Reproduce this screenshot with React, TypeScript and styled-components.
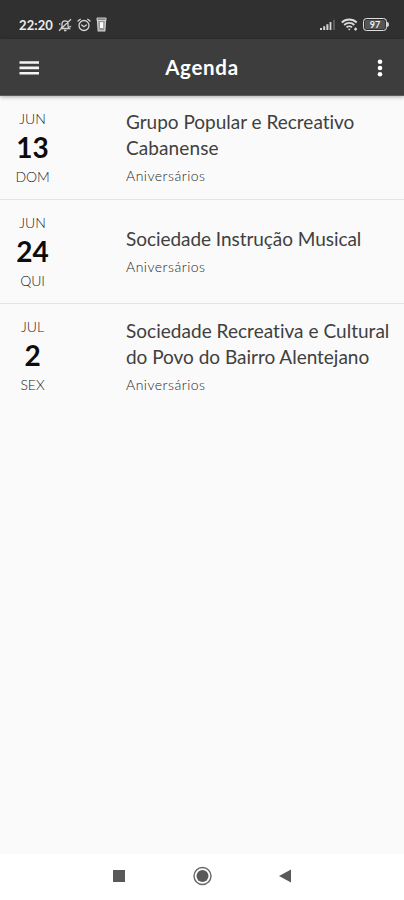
import React from 'react';
import styled, { createGlobalStyle } from 'styled-components';

const GlobalStyle = createGlobalStyle`
  * { box-sizing: border-box; }
  body { margin: 0; background: #fafafa; }
`;

const Screen = styled.div`
  width: 404px;
  height: 900px;
  display: flex;
  flex-direction: column;
  overflow: hidden;
  background: #fafafa;
  font-family: Lato, 'Open Sans', sans-serif;
`;

const StatusBar = styled.div`
  flex: 0 0 39px;
  display: flex;
  justify-content: space-between;
  align-items: center;
  padding: 10px 15px 0 19px;
  background: #303030;
  color: #ececec;
`;

const StatusGroup = styled.div<{ $gap: number }>`
  display: flex;
  align-items: center;
  gap: ${(p) => p.$gap}px;
  svg { display: block; }
`;

const Clock = styled.span`
  width: 34px;
  font: 700 13px/16px Lato, sans-serif;
  letter-spacing: 0.1px;
  white-space: nowrap;
`;

const AppBar = styled.header`
  flex: 0 0 57px;
  display: grid;
  grid-template-columns: 60px 1fr 60px;
  align-items: center;
  background: #3d3d3d;
  color: #fff;
  border-bottom: 1px solid #5a5a5a;
  box-shadow: 0 1px 4px rgba(0, 0, 0, 0.32);
  z-index: 1;
`;

const Title = styled.h1`
  margin: 0;
  text-align: center;
  font-size: 20.5px;
  line-height: 28px;
  font-weight: 700;
  letter-spacing: 0.7px;
`;

const IconButton = styled.button<{ $side: 'left' | 'right' }>`
  display: flex;
  justify-content: ${(p) => (p.$side === 'left' ? 'flex-start' : 'flex-end')};
  padding: ${(p) => (p.$side === 'left' ? '1px 0 0 19px' : '1px 20px 0 0')};
  border: 0;
  background: none;
  color: #fff;
`;

const EventList = styled.main`
  flex: 1;
`;

const EventRow = styled.article<{ $last?: boolean }>`
  height: 104px;
  display: grid;
  grid-template-columns: 65px 1fr;
  column-gap: 61px;
  align-items: center;
  border-bottom: ${(p) => (p.$last ? '0' : '1px solid #e4e4e4')};
`;

const DateBlock = styled.div`
  display: flex;
  flex-direction: column;
  align-items: center;
  color: #1c1c1c;
`;

const DateLabel = styled.span`
  font-size: 14px;
  font-weight: 300;
  line-height: 20px;
  letter-spacing: -0.1px;
`;

const Day = styled.strong`
  font-size: 28px;
  line-height: 36px;
  padding-bottom: 2px;
  font-weight: 700;
  color: #0c0c0c;
`;

const Details = styled.div`
  color: #404040;
`;

const Line = styled.div<{ $spacing: number }>`
  font-size: 19px;
  line-height: 26px;
  letter-spacing: ${(p) => p.$spacing}px;
  white-space: nowrap;
`;

const Category = styled.div`
  margin-top: 5px;
  font-size: 14px;
  font-weight: 300;
  line-height: 20px;
  letter-spacing: 0.5px;
  color: #1c1c1c;
`;

const NavBar = styled.nav`
  flex: 0 0 46px;
  display: flex;
  justify-content: center;
  align-items: center;
  background: #fff;
  svg { display: block; }
`;

type Agenda = { month: string; day: string; weekday: string; lines: { text: string; spacing: number }[] };

const events: Agenda[] = [
  {
    month: 'JUN', day: '13', weekday: 'DOM',
    lines: [{ text: 'Grupo Popular e Recreativo', spacing: -0.01 }, { text: 'Cabanense', spacing: 0.1 }],
  },
  { month: 'JUN', day: '24', weekday: 'QUI', lines: [{ text: 'Sociedade Instrução Musical', spacing: -0.05 }] },
  {
    month: 'JUL', day: '2', weekday: 'SEX',
    lines: [
      { text: 'Sociedade Recreativa e Cultural', spacing: 0.03 },
      { text: 'do Povo do Bairro Alentejano', spacing: -0.02 },
    ],
  },
];

const MutedBell = () => (
  <svg width="14" height="14" viewBox="0 0 14 14" fill="none" stroke="#d0d0d0" strokeWidth="1.3">
    <path d="M3 10.5h8.5L10 8.5V5.3C9.6 2 4.6 2 4 5.3v3.2zM6 12.5h2.5M1 12.8L13 1.2M1.2 5.5l1.2 1M11.5 8l1.5 1" />
  </svg>
);

const AlarmIcon = () => (
  <svg width="14" height="14" viewBox="0 0 14 14" fill="none" stroke="#d6d6d6" strokeWidth="1.3" strokeLinecap="round">
    <circle cx="7" cy="7.5" r="5" />
    <path d="M1 3.1l2.3-1.8M13 3.1l-2.3-1.8M4.7 7l2.1 1.7L9.4 7" />
  </svg>
);

const BinIcon = () => (
  <svg width="11" height="15" viewBox="0 0 11 15">
    <path d="M1 1h9v2.3H1z" fill="#777" stroke="#cfcfcf" />
    <path d="M1.5 3.5h8l-.7 10.3H2.2z" fill="#969696" stroke="#d4d4d4" strokeWidth="1.2" />
    <path d="M4 5.2h3.2V11H4z" fill="#fff" />
  </svg>
);

const SignalIcon = () => (
  <svg width="16" height="12" viewBox="0 0 16 12" fill="#d5d5d5">
    <path d="M0 9h2v2H0zM3.2 7.3h2V11h-2zM6.4 5.2h2V11h-2zM9.6 3h1.8v8H9.6z" />
    <path d="M13.2.8h1.6V11h-1.6z" fill="#666" />
  </svg>
);

const WifiIcon = () => (
  <svg width="17" height="14" viewBox="0 0 17 14" fill="none" stroke="#dadada" strokeWidth="1.8">
    <path d="M.8 4.5C5 .5 11.5.5 15.7 4.5M3.2 7c2.8-2.8 7.3-2.8 10.1 0M5.5 9.4c1.5-1.5 4-1.5 5.5 0" />
    <path d="M6.8 10.7h2.9l-1.4 1.8zM14.6 9.2l1.7 1.9-1.7 1.8-1.7-1.8z" fill="#dadada" stroke="none" />
  </svg>
);

const BatteryShell = styled.span`
  display: flex;
  align-items: center;
`;

const BatteryBody = styled.span`
  width: 24px;
  height: 13px;
  border: 1.5px solid #dedede;
  border-radius: 3.5px;
  display: flex;
  align-items: center;
  justify-content: center;
  background: #555;
  box-shadow: inset 0 0 0 1px #303030;
  color: #f0f0f0;
  font: 700 9px/10px Lato, sans-serif;
`;

const BatteryTip = styled.span`
  width: 2px;
  height: 5px;
  background: #d0d0d0;
  border-radius: 0 2px 2px 0;
`;

export default function App() {
  return (
    <Screen>
      <GlobalStyle />
      <StatusBar>
        <StatusGroup $gap={5}>
          <Clock>22:20</Clock>
          <MutedBell />
          <AlarmIcon />
          <BinIcon />
        </StatusGroup>
        <StatusGroup $gap={5}>
          <SignalIcon />
          <WifiIcon />
          <BatteryShell>
            <BatteryBody>97</BatteryBody>
            <BatteryTip />
          </BatteryShell>
        </StatusGroup>
      </StatusBar>
      <AppBar>
        <IconButton $side="left" aria-label="Menu">
          <svg width="21" height="16" viewBox="0 0 21 16" fill="#f4f4f4">
            <path d="M.5 1.2h19.5v2.6H.5zM.5 6.6h19.5v2.6H.5zM.5 12h19.5v2.6H.5z" />
          </svg>
        </IconButton>
        <Title>Agenda</Title>
        <IconButton $side="right" aria-label="Mais">
          <svg width="8" height="20" viewBox="0 0 8 20" fill="#fff">
            <circle cx="4" cy="3.8" r="2.3" />
            <circle cx="4" cy="10" r="2.3" />
            <circle cx="4" cy="16.2" r="2.3" />
          </svg>
        </IconButton>
      </AppBar>
      <EventList>
        {events.map((e, i) => (
          <EventRow key={e.month + e.day} $last={i === events.length - 1}>
            <DateBlock>
              <DateLabel>{e.month}</DateLabel>
              <Day>{e.day}</Day>
              <DateLabel>{e.weekday}</DateLabel>
            </DateBlock>
            <Details>
              {e.lines.map((l) => (
                <Line key={l.text} $spacing={l.spacing}>{l.text}</Line>
              ))}
              <Category>Aniversários</Category>
            </Details>
          </EventRow>
        ))}
      </EventList>
      <NavBar>
        <svg width="200" height="24" viewBox="0 0 200 24" fill="#595959">
          <path d="M11 5h12v12H11z" />
          <circle cx="100.5" cy="11" r="8.5" fill="none" stroke="#666" strokeWidth="1.4" />
          <circle cx="100.5" cy="11" r="6" />
          <path d="M189 4.5v13L177 11z" />
        </svg>
      </NavBar>
    </Screen>
  );
}
